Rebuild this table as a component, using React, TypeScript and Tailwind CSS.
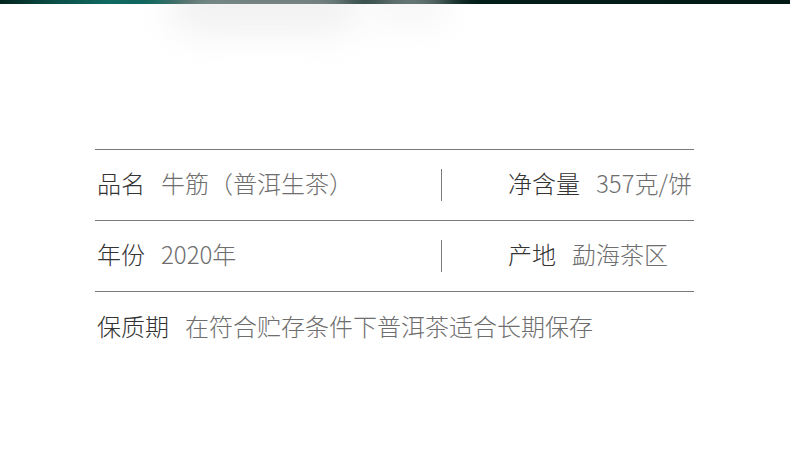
import * as React from "react";

type Item = {
  label: string;
  value: string;
};

const rows: Item[][] = [
  [
    { label: "品名", value: "牛筋（普洱生茶）" },
    { label: "净含量", value: "357克/饼" },
  ],
  [
    { label: "年份", value: "2020年" },
    { label: "产地", value: "勐海茶区" },
  ],
];

const Cell = ({ item }: { item: Item }) => (
  <div className="flex items-center gap-[16px] whitespace-nowrap">
    <span className="font-light text-[#333333]">{item.label}</span>
    <span className="font-extralight text-[#6e6e6e]">{item.value}</span>
  </div>
);

const App = () => {
  return (
    <div
      className="relative w-[790px] h-[456px] overflow-hidden bg-white"
      style={{ fontFamily: '"Noto Sans CJK SC", "Noto Sans", sans-serif' }}
    >
      {/* top strip of the product photo */}
      <div className="h-[4px] w-full bg-[linear-gradient(to_right,#03231e_0%,#0b4f48_7%,#116a61_14%,#0f6158_20%,#05302a_24%,#02201b_32%,#021a15_100%)]" />
      <div className="pointer-events-none absolute left-[170px] top-[-18px] h-[50px] w-[190px] rounded-full bg-[#e6e6e6] opacity-60 blur-[18px]" />
      <div className="pointer-events-none absolute left-[370px] top-[-18px] h-[44px] w-[80px] rounded-full bg-[#eeeeee] opacity-50 blur-[16px]" />

      <div className="ml-[95px] mt-[145px] w-[599px] text-[24px] leading-none">
        {rows.map((row, i) => (
          <div
            key={i}
            className="flex h-[71px] items-center border-t border-[#7a7a7a] pb-[4px] pl-[2px]"
          >
            <div className="w-[344px]">
              <Cell item={row[0]} />
            </div>
            <div className="mt-[4px] h-[32px] w-px bg-[#7a7a7a]" />
            <div className="pl-[66px]">
              <Cell item={row[1]} />
            </div>
          </div>
        ))}
        <div className="flex h-[71px] items-center border-t border-[#7a7a7a] pb-[3px] pl-[2px]">
          <Cell item={{ label: "保质期", value: "在符合贮存条件下普洱茶适合长期保存" }} />
        </div>
      </div>
    </div>
  );
};

export default App;
